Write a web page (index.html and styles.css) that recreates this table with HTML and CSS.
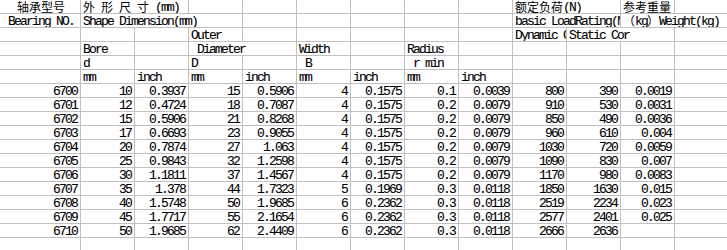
FILE: index.html
```html
<!DOCTYPE html>
<html lang="zh">
<head>
<meta charset="utf-8">
<title>6700 bearings</title>
<link rel="stylesheet" href="styles.css">
</head>
<body>
<div class="sheet">
  <!-- row 1 -->
  <div class="c ctr"><span class="cjk">轴承型号</span></div>
  <div class="c s2"><span class="cjk">外</span> <span class="cjk">形</span> <span class="cjk">尺</span> <span class="cjk">寸</span> (mm)</div>
  <div class="c"></div><div class="c"></div><div class="c"></div><div class="c"></div><div class="c"></div><div class="c"></div>
  <div class="c s2"><span class="cjk">额定负荷</span>(N)</div>
  <div class="c"><span class="cjk">参考重量</span></div>
  <div class="c"></div>
  <!-- row 2 -->
  <div class="c ctr">Bearing NO.</div>
  <div class="c s3">Shape Dimension(mm)</div>
  <div class="c"></div><div class="c"></div><div class="c"></div><div class="c"></div><div class="c"></div>
  <div class="c s2">basic LoadRating(N)</div>
  <div class="c s2"><span class="cjk">（</span>kg<span class="cjk">）</span>Weight(kg)</div>
  <!-- row 3 -->
  <div class="c"></div><div class="c"></div><div class="c"></div>
  <div class="c">Outer</div>
  <div class="c"></div><div class="c"></div><div class="c"></div><div class="c"></div><div class="c"></div>
  <div class="c">Dynamic Cr</div>
  <div class="c s2">Static Cor</div>
  <div class="c"></div>
  <!-- row 4 -->
  <div class="c"></div>
  <div class="c">Bore</div>
  <div class="c"></div>
  <div class="c s2"> Diameter</div>
  <div class="c">Width</div>
  <div class="c"></div>
  <div class="c">Radius</div>
  <div class="c"></div><div class="c"></div><div class="c"></div><div class="c"></div><div class="c"></div>
  <!-- row 5 -->
  <div class="c"></div>
  <div class="c">d</div>
  <div class="c"></div>
  <div class="c">D</div>
  <div class="c"></div>
  <div class="c"> B</div>
  <div class="c"></div>
  <div class="c"> r min</div>
  <div class="c"></div><div class="c"></div><div class="c"></div><div class="c"></div><div class="c"></div>
  <!-- row 6 -->
  <div class="c"></div>
  <div class="c">mm</div><div class="c">inch</div>
  <div class="c">mm</div><div class="c">inch</div>
  <div class="c">mm</div><div class="c">inch</div>
  <div class="c">mm</div><div class="c">inch</div>
  <div class="c"></div><div class="c"></div><div class="c"></div><div class="c"></div>
  <!-- data -->
  <div class="c r">6700</div><div class="c r">10</div><div class="c r">0.3937</div><div class="c r">15</div><div class="c r">0.5906</div><div class="c r">4</div><div class="c r">0.1575</div><div class="c r">0.1</div><div class="c r">0.0039</div><div class="c r">800</div><div class="c r">390</div><div class="c r">0.0019</div><div class="c"></div>
  <div class="c r">6701</div><div class="c r">12</div><div class="c r">0.4724</div><div class="c r">18</div><div class="c r">0.7087</div><div class="c r">4</div><div class="c r">0.1575</div><div class="c r">0.2</div><div class="c r">0.0079</div><div class="c r">910</div><div class="c r">530</div><div class="c r">0.0031</div><div class="c"></div>
  <div class="c r">6702</div><div class="c r">15</div><div class="c r">0.5906</div><div class="c r">21</div><div class="c r">0.8268</div><div class="c r">4</div><div class="c r">0.1575</div><div class="c r">0.2</div><div class="c r">0.0079</div><div class="c r">850</div><div class="c r">490</div><div class="c r">0.0036</div><div class="c"></div>
  <div class="c r">6703</div><div class="c r">17</div><div class="c r">0.6693</div><div class="c r">23</div><div class="c r">0.9055</div><div class="c r">4</div><div class="c r">0.1575</div><div class="c r">0.2</div><div class="c r">0.0079</div><div class="c r">960</div><div class="c r">610</div><div class="c r">0.004</div><div class="c"></div>
  <div class="c r">6704</div><div class="c r">20</div><div class="c r">0.7874</div><div class="c r">27</div><div class="c r">1.063</div><div class="c r">4</div><div class="c r">0.1575</div><div class="c r">0.2</div><div class="c r">0.0079</div><div class="c r">1030</div><div class="c r">720</div><div class="c r">0.0059</div><div class="c"></div>
  <div class="c r">6705</div><div class="c r">25</div><div class="c r">0.9843</div><div class="c r">32</div><div class="c r">1.2598</div><div class="c r">4</div><div class="c r">0.1575</div><div class="c r">0.2</div><div class="c r">0.0079</div><div class="c r">1090</div><div class="c r">830</div><div class="c r">0.007</div><div class="c"></div>
  <div class="c r">6706</div><div class="c r">30</div><div class="c r">1.1811</div><div class="c r">37</div><div class="c r">1.4567</div><div class="c r">4</div><div class="c r">0.1575</div><div class="c r">0.2</div><div class="c r">0.0079</div><div class="c r">1170</div><div class="c r">980</div><div class="c r">0.0083</div><div class="c"></div>
  <div class="c r">6707</div><div class="c r">35</div><div class="c r">1.378</div><div class="c r">44</div><div class="c r">1.7323</div><div class="c r">5</div><div class="c r">0.1969</div><div class="c r">0.3</div><div class="c r">0.0118</div><div class="c r">1850</div><div class="c r">1630</div><div class="c r">0.015</div><div class="c"></div>
  <div class="c r">6708</div><div class="c r">40</div><div class="c r">1.5748</div><div class="c r">50</div><div class="c r">1.9685</div><div class="c r">6</div><div class="c r">0.2362</div><div class="c r">0.3</div><div class="c r">0.0118</div><div class="c r">2519</div><div class="c r">2234</div><div class="c r">0.023</div><div class="c"></div>
  <div class="c r">6709</div><div class="c r">45</div><div class="c r">1.7717</div><div class="c r">55</div><div class="c r">2.1654</div><div class="c r">6</div><div class="c r">0.2362</div><div class="c r">0.3</div><div class="c r">0.0118</div><div class="c r">2577</div><div class="c r">2401</div><div class="c r">0.025</div><div class="c"></div>
  <div class="c r">6710</div><div class="c r">50</div><div class="c r">1.9685</div><div class="c r">62</div><div class="c r">2.4409</div><div class="c r">6</div><div class="c r">0.2362</div><div class="c r">0.3</div><div class="c r">0.0118</div><div class="c r">2666</div><div class="c r">2636</div><div class="c"></div><div class="c"></div>
  <!-- empty row -->
  <div class="c"></div><div class="c"></div><div class="c"></div><div class="c"></div><div class="c"></div><div class="c"></div><div class="c"></div><div class="c"></div><div class="c"></div><div class="c"></div><div class="c"></div><div class="c"></div><div class="c"></div>
</div>
</body>
</html>
```

FILE: styles.css
```css
html, body {
  margin: 0;
  padding: 0;
  background: #ffffff;
  overflow: hidden;
}

.sheet {
  display: grid;
  grid-template-columns: 81px repeat(12, 54px);
  grid-auto-rows: 14px;
  font-family: "Liberation Mono", monospace;
  font-size: 13px;
  letter-spacing: -1.8px;
  color: #000000;
  -webkit-text-stroke: 0.1px #000000;
}

.c {
  box-sizing: border-box;
  border-right: 1px solid #c0c0c0;
  border-bottom: 1px solid #c0c0c0;
  line-height: 13px;
  padding-top: 1px;
  padding-left: 2px;
  white-space: pre;
  overflow: hidden;
}

.r {
  text-align: right;
  padding-left: 0;
  padding-right: 3px;
}

.ctr {
  text-align: center;
}

.s2 {
  grid-column: span 2;
}

.s3 {
  grid-column: span 3;
}

.cjk {
  font-family: "Noto Sans CJK SC", sans-serif;
  font-size: 12px;
  letter-spacing: 0;
  line-height: 12px;
  vertical-align: top;
  -webkit-text-stroke: 0;
}
```
